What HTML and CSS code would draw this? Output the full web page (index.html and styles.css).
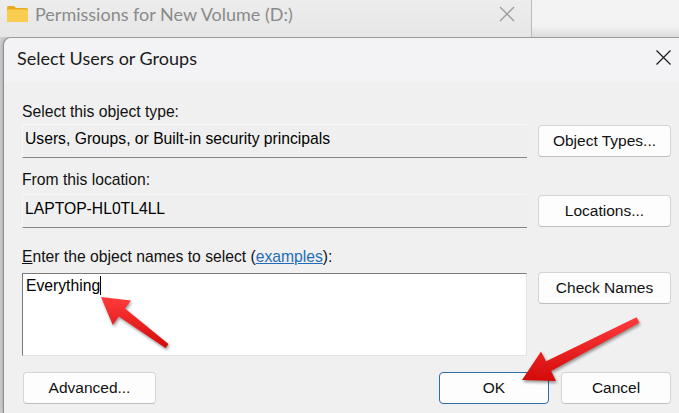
FILE: index.html
```html
<!DOCTYPE html>
<html lang="en">
<head>
    <meta charset="UTF-8">
    <title>Select Users or Groups</title>
    <link rel="stylesheet" href="styles.css">
</head>
<body>
    <div class="behind">
        <div class="behind-win">
            <svg class="folder" width="21" height="16" viewBox="0 0 21 16">
                <path d="M0 1.5 Q0 0 1.5 0 H7 L9 2 H19.5 Q21 2 21 3.5 V14.5 Q21 16 19.5 16 H1.5 Q0 16 0 14.5 Z" fill="#e9ab22"/>
                <path d="M0 4.5 Q0 3.5 1 3.5 H20 Q21 3.5 21 4.5 V14.5 Q21 16 19.5 16 H1.5 Q0 16 0 14.5 Z" fill="#f8cd50"/>
            </svg>
            <span class="behind-title">Permissions for New Volume (D:)</span>
            <svg class="behind-close" width="16" height="16" viewBox="0 0 16 16">
                <path d="M1 1 L15 15 M15 1 L1 15" stroke="#9b9b9b" stroke-width="1.3"/>
            </svg>
        </div>
        <div class="behind-rest"></div>
    </div>

    <div class="dialog">
        <div class="titlebar">
            <span class="title">Select Users or Groups</span>
            <svg class="close" width="15" height="15" viewBox="0 0 15 15">
                <path d="M0.5 0.5 L14.5 14.5 M14.5 0.5 L0.5 14.5" stroke="#1a1a1a" stroke-width="1.2"/>
            </svg>
        </div>

        <div class="body">
            <div class="label first">Select this object type:</div>
            <div class="row">
                <div class="field">Users, Groups, or Built-in security principals</div>
                <button class="btn side">Object Types...</button>
            </div>

            <div class="label second">From this location:</div>
            <div class="row">
                <div class="field">LAPTOP-HL0TL4LL</div>
                <button class="btn side">Locations...</button>
            </div>

            <div class="label third"><u>E</u>nter the object names to select (<a href="#" class="link">examples</a>):</div>
            <div class="row top">
                <div class="names">Everything<span class="caret"></span></div>
                <button class="btn side">Check Names</button>
            </div>

            <div class="footer">
                <button class="btn advanced">Advanced...</button>
                <div class="spacer"></div>
                <button class="btn ok">OK</button>
                <button class="btn cancel">Cancel</button>
            </div>
        </div>
    </div>

    <!-- red callout arrows drawn over the dialog -->
    <svg class="arrows" width="679" height="413" viewBox="0 0 679 413">
        <defs>
            <linearGradient id="red" x1="0" y1="0" x2="0" y2="1">
                <stop offset="0" stop-color="#ff3b3b"/>
                <stop offset="1" stop-color="#d40a0a"/>
            </linearGradient>
        </defs>
        <polygon class="arrow" points="101,297 131,300.5 125,308.6 168.5,344 165.5,348 118.8,316.6 112.8,325" fill="url(#red)"/>
        <polygon class="arrow" points="522,380 541,351.5 546.1,361.3 636.6,317.3 639.4,322.7 551.1,371.1 556,381" fill="url(#red)"/>
    </svg>
</body>
</html>
```

FILE: styles.css
```css
body {
    margin: 0;
    width: 679px;
    height: 413px;
    overflow: hidden;
    position: relative;
    background-color: #d3d3d3;
    font-family: "Liberation Sans", Arial, sans-serif;
    color: #000;
}
.behind {
    display: flex;
    height: 37px;
}
.behind-win {
    width: 532px;
    display: flex;
    align-items: center;
    background: linear-gradient(#ededed, #e6e6e6);
    border-right: 1px solid #b9b9b9;
    box-sizing: border-box;
    padding-bottom: 10px;
}
.behind-rest {
    flex: 1;
    background: linear-gradient(#f3f3f3 70%, #dcdcdc);
}
.folder {
    margin-left: 7px;
    margin-right: 7px;
}
.behind-title {
    font-family: Lato, "Noto Sans", sans-serif;
    font-size: 18px;
    color: #8a8a8a;
}
.behind-close {
    margin-left: auto;
    margin-right: 16px;
}
.dialog {
    margin-left: 3px;
    width: 675px;
    height: 375px;
    background-color: #f0f0f0;
    border-top: 1px solid #9a9a9a;
    border-left: 1px solid #8c8c8c;
    border-top-left-radius: 8px;
    box-shadow: 0 0 6px rgba(0,0,0,0.25);
    overflow: hidden;
}
.titlebar {
    height: 44px;
    box-sizing: border-box;
    padding: 0 0 5px 13px;
    display: flex;
    align-items: center;
    background-color: #f3f3f5;
    border-top-left-radius: 8px;
}
.title {
    font-family: Lato, "Noto Sans", sans-serif;
    font-size: 18px;
    color: #1b1b1b;
}
.close {
    margin-left: auto;
    margin-right: 8px;
}
.body {
    padding-left: 18px;
    font-size: 15.7px;
}
.label {
    height: 18px;
    line-height: 18px;
    color: #111;
    margin-bottom: 3px;
}
.label.first {
    margin-top: 21px;
}
.label.second {
    margin-top: 13px;
    margin-bottom: 5px;
}
.label.third {
    margin-top: 20px;
    margin-bottom: 7px;
}
.link {
    color: #1f6db6;
}
.row {
    display: flex;
    align-items: center;
    gap: 11px;
}
.row.top {
    align-items: flex-start;
}
.field {
    width: 505px;
    height: 34px;
    box-sizing: border-box;
    padding: 5px 0 0 2px;
    line-height: 18px;
    background-color: #efefef;
    border-top: 1px solid #f8f8f8;
    border-left: 1px solid #f8f8f8;
    border-bottom: 1px solid #858585;
}
.names {
    width: 505px;
    height: 83px;
    box-sizing: border-box;
    padding: 2px 0 0 3px;
    line-height: 18px;
    background-color: #fff;
    border-top: 1px solid #7a7a7a;
    border-left: 1px solid #7a7a7a;
    border-right: 1px solid #e2e2e2;
    border-bottom: 1px solid #e2e2e2;
}
.caret {
    display: inline-block;
    width: 1px;
    height: 19px;
    background-color: #000;
    vertical-align: -4px;
}
.btn {
    height: 32px;
    box-sizing: border-box;
    font-family: "Liberation Sans", Arial, sans-serif;
    font-size: 15.5px;
    color: #111;
    background-color: #fdfdfd;
    border: 1px solid #d4d4d4;
    border-bottom-color: #bfbfbf;
    border-radius: 4px;
    padding: 0;
}
.btn.side {
    width: 133px;
    margin-top: -1px;
}
.footer {
    display: flex;
    margin-top: 16px;
    width: 649px;
    gap: 12px;
}
.btn.advanced {
    width: 133px;
    margin-left: 1px;
}
.spacer {
    flex: 1;
}
.btn.ok {
    width: 110px;
    border: 1px solid #2f6fa6;
}
.btn.cancel {
    width: 110px;
}
.arrows {
    position: absolute;
    top: 0;
    left: 0;
    pointer-events: none;
}
.arrow {
    filter: drop-shadow(1px 2px 1.5px rgba(0,0,0,0.4));
}
```
